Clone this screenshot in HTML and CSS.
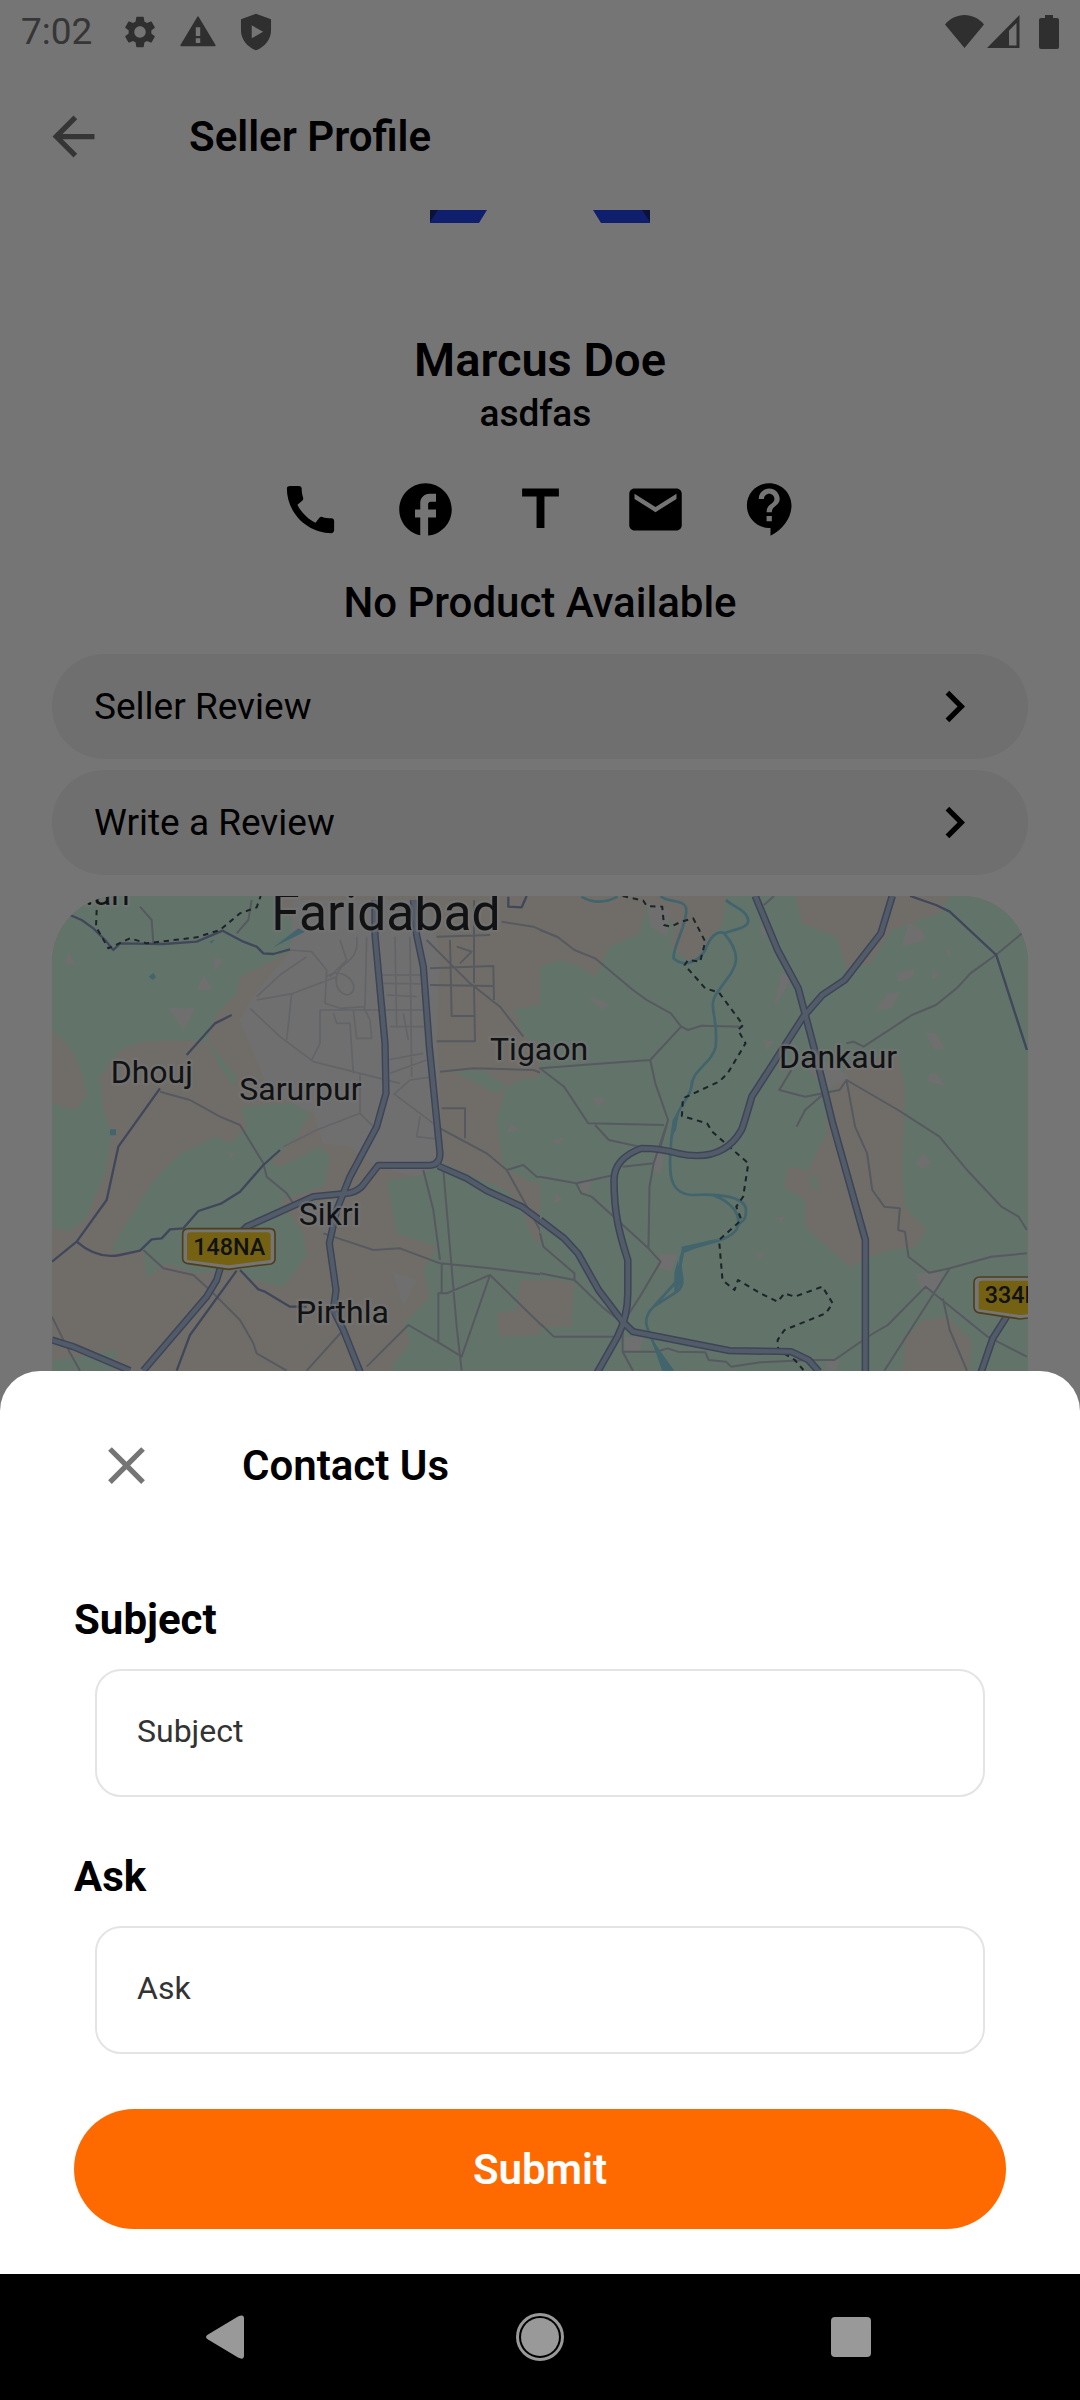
FILE: index.html
```html
<!DOCTYPE html>
<html lang="en">
<head>
  <meta charset="UTF-8">
  <meta name="viewport" content="width=device-width, initial-scale=1.0">
  <title>Seller Profile</title>
  <link rel="stylesheet" href="styles.css">
</head>
<body>
  <div class="app">
    <div class="status-bar">
      <span class="time">7:02</span>
      <svg class="status-icon" viewBox="0 0 24 24"><path fill-rule="evenodd" d="M19.14 12.94c.04-.3.06-.61.06-.94s-.02-.64-.07-.94l2.03-1.58c.18-.14.23-.41.12-.61l-1.92-3.32c-.12-.22-.37-.29-.59-.22l-2.39.96c-.5-.38-1.03-.7-1.62-.94l-.36-2.54c-.04-.24-.24-.41-.48-.41h-3.84c-.24 0-.43.17-.47.41l-.36 2.54c-.59.24-1.13.57-1.62.94l-2.39-.96c-.22-.08-.47 0-.59.22L2.74 8.87c-.12.21-.08.47.12.61l2.03 1.58c-.05.3-.09.63-.09.94s.02.64.07.94l-2.03 1.58c-.18.14-.23.41-.12.61l1.92 3.32c.12.22.37.29.59.22l2.39-.96c.5.38 1.03.7 1.62.94l.36 2.54c.05.24.24.41.48.41h3.84c.24 0 .44-.17.47-.41l.36-2.54c.59-.24 1.13-.56 1.62-.94l2.39.96c.22.08.47 0 .59-.22l1.92-3.32c.12-.22.07-.47-.12-.61l-2.01-1.58zM12 15.6c-1.98 0-3.6-1.62-3.6-3.6s1.62-3.6 3.6-3.6 3.6 1.62 3.6 3.6-1.62 3.6-3.6 3.6z"/></svg>
      <svg class="status-icon" viewBox="0 0 24 24"><path d="M1.5 21h21a.6.6 0 0 0 .5-1L12.500 2.500a.6.6 0 0 0-1 0L1 20a.6.6 0 0 0 .5 1zM13.400 19h-2.800v-3h2.800zm0-4.500h-2.800V9h2.800z"/></svg>
      <svg class="status-icon" viewBox="0 0 24 24"><path d="M12 .5 2.500 4v7c0 5.500 4 10.500 9.500 12.500 5.500-2 9.500-7 9.500-12.500V4zM9.300 16V7.800l7.200 4.100z"/></svg>
      <span class="spacer"></span>
      <svg class="wifi-icon" viewBox="0 0 114 34"><path d="M0 9.500C5 3.500 12 0 19.500 0S34 3.500 39 9.500L19.500 33z"/><path fill-rule="evenodd" d="M42 33 74.500 0v33zM64 30.500h7.500V8L64 15.500z"/><path d="M94 5q0-2 2-2h4V0h8v3h4q2 0 2 2v27q0 2-2 2H96q-2 0-2-2z"/></svg>
    </div>

    <header class="app-bar">
      <button class="icon-button" aria-label="Back">
        <svg class="icon gray" viewBox="0 0 24 24"><path d="M20 11H7.830l5.590-5.590L12 4l-8 8 8 8 1.410-1.410L7.830 13H20v-2z"/></svg>
      </button>
      <h1 class="title">Seller Profile</h1>
    </header>

    <main class="content">
      <!-- bottom of the seller logo, scrolled under the app bar -->
      <svg class="logo" viewBox="0 0 220 13"><path fill="#2343ef" d="M0 0h57l-8 13H0zM163 0h57v13h-49z"/><path fill="#16297f" d="M0 0h8L0 12zM212 0h8v12z"/></svg>

      <h2 class="seller-name">Marcus Doe</h2>
      <p class="seller-about">asdfas&nbsp;</p>

      <div class="contacts">
        <a href="#phone" aria-label="Phone"><svg class="icon" viewBox="0 0 24 24"><path d="M20.010 15.380c-1.230 0-2.420-.2-3.530-.56-.35-.12-.74-.03-1.010.24l-1.570 1.970c-2.830-1.350-5.480-3.900-6.890-6.830l1.950-1.660c.27-.28.35-.67.24-1.020-.37-1.110-.56-2.300-.56-3.530 0-.54-.45-.99-.99-.99H4.190C3.650 3 3 3.240 3 3.990 3 13.280 10.730 21 20.010 21c.71 0 .99-.63.99-1.180v-3.450c0-.54-.45-.99-.99-.99z"/></svg></a>
        <a href="#facebook" aria-label="Facebook"><svg class="icon" viewBox="0 0 24 24"><path d="M22 12c0-5.520-4.480-10-10-10S2 6.480 2 12c0 4.840 3.440 8.870 8 9.800V15H8v-3h2V9.500C10 7.570 11.570 6 13.500 6H16v3h-2c-.55 0-1 .45-1 1v2h3v3h-3v6.950c5.050-.5 9-4.760 9-9.950z"/></svg></a>
        <a href="#twitter" aria-label="Twitter"><svg class="icon" viewBox="0 0 24 24"><path d="M5 4v3h5.500v12h3V7H19V4z"/></svg></a>
        <a href="#email" aria-label="Email"><svg class="icon" viewBox="0 0 24 24"><path d="M20 4H4c-1.100 0-1.990.9-1.990 2L2 18c0 1.100.9 2 2 2h16c1.100 0 2-.9 2-2V6c0-1.100-.9-2-2-2zm0 4l-8 5-8-5V6l8 5 8-5v2z"/></svg></a>
        <a href="#contact" aria-label="Contact us"><svg class="icon" viewBox="0 0 24 24"><path d="M11.500 2C6.810 2 3 5.810 3 10.500S6.810 19 11.500 19h.5v3c4.860-2.340 8-7 8-11.500C20 5.810 16.190 2 11.500 2zm1 14.500h-2v-2h2v2zm0-3.500h-2c0-3.250 3-3 3-5 0-1.100-.9-2-2-2s-2 .9-2 2h-2c0-2.210 1.790-4 4-4s4 1.790 4 4c0 2.500-3 2.750-3 5z"/></svg></a>
      </div>

      <p class="empty">No Product Available</p>

      <div class="links">
        <a class="link-row" href="#reviews">Seller Review
          <svg class="icon" viewBox="0 0 24 24"><path d="M10 6 8.590 7.410 13.170 12l-4.580 4.590L10 18l6-6z"/></svg></a>
        <a class="link-row" href="#write">Write a Review
          <svg class="icon" viewBox="0 0 24 24"><path d="M10 6 8.590 7.410 13.170 12l-4.580 4.590L10 18l6-6z"/></svg></a>
      </div>

      <svg class="map" viewBox="36 48 2928 1800" preserveAspectRatio="xMidYMin slice" role="img" aria-label="Map">
        <rect class="land" x="36" y="48" width="2928" height="1800"/>

        <!-- west half -->
        <path class="forest" d="M36 48H700L760 120 750 215 600 290 590 340 530 400 500 480 590 590 580 620 540 560 500 485 400 480 300 485 240 510 180 590 190 690 215 760 195 880 140 1010 90 1055 36 1040V670L110 690 140 640 120 560 80 490 36 455z"/>
        <path class="forest" d="M600 680 760 670 810 700 770 770 690 850 720 860 840 800 870 830 850 920 720 960 790 1060 800 1130 730 1220 640 1200 590 1170 470 1180 380 1150 320 1195 310 1110 210 1115 240 1060 340 900 420 820 530 770 570 790 620 740z"/>
        <path class="forest" d="M1040 900 1130 890 1210 850 1400 930 1450 1000 1480 1080 1640 1150 1640 1200 1440 1200 1430 1290 1370 1300 1380 1370 1640 1360V1848H1030L1060 1450 1110 1390 1090 1330 1170 1250 1150 1170 1190 1100 1070 1060z"/>
        <path class="forest" d="M1560 250 1500 310 1520 370 1420 390 1450 470 1560 520V900L1480 910 1390 860 1370 720 1400 620 1330 570 1240 575 1330 620 1370 640 1440 600 1560 580z"/>
        <path class="forest" d="M36 1440 120 1430 230 1410 220 1480 36 1520z"/>
        <path class="urban" d="M760 60H1160L1200 220 1190 480 1210 850 1130 890 1010 860 930 800 850 790 820 700 690 640 600 420 640 350 750 215z"/>
        <path class="urban" d="M490 285 520 330 470 330zM520 235 550 238 525 275zM385 385 465 385 430 450zM85 215 108 255 75 250zM780 970 900 960 860 1060 790 1010zM1060 1180 1130 1200 1090 1280zM1410 730 1440 750 1400 760zM565 815 585 820 570 838z"/>

        <g class="street">
          <path d="M750 210 815 215 860 270 855 370 900 385 975 380 980 170M650 350 720 285 800 230M650 360 760 340 890 290M755 340 740 480M630 385 720 470 820 545 960 580 1080 610M840 390V490L815 540M840 390H1150M880 400 890 430 930 430 940 580M940 390 950 475 995 475 990 420 970 380M860 290C900 260 950 300 940 330S880 340 890 290 960 250 950 170M900 180 920 240 870 290M1020 285H1150M1030 310 1160 312M1040 345 1130 350M1050 440H1170M1040 540 1150 520M1050 580 1160 540M1110 170 1115 590M1065 170 1070 440M1090 400 1105 480M960 580 960 700 1000 740M730 800 830 750 960 700M1060 640 1200 745 1340 820M1140 710 1130 770 1200 778M1065 640 1110 600 1180 590"/>
        </g>
        <g class="lane">
          <path d="M300 80 335 120 340 190M590 160 625 120 635 60M360 635 450 660 540 710 600 735 670 850 680 890 740 940 760 970M850 1060 1000 1110 1080 1105 1200 1150 1350 1165 1560 1190M310 1110 370 1165 460 1185 520 1240 600 1320 640 1390 650 1420 740 1472M36 1310 80 1400 120 1472M800 1472 910 1350M980 1460 1105 1335 1200 1390 1265 1430 1350 1185 1540 1370M1350 1185 1290 1210 1220 1240 1195 1240 1195 1390M1205 1150V1240M1150 870 1180 990 1200 1140M1210 870 1250 1340 1265 1472M1200 745 1340 820 1400 870 1450 960 1500 1050 1510 1100 1600 1150M1400 870 1450 855 1490 890 1600 900M1200 575 1300 565 1480 570 1560 600M1205 685H1275V775"/>
          <path d="M1190 170 1350 165M1170 265 1360 258 1362 360M1170 315 1360 318M1230 180 1235 408 1302 408M1302 60V310M1190 484H1305L1302 318M1160 180 1290 310 1380 380 1450 470M1385 125 1480 140 1560 175M1250 200 1295 215 1260 250"/>
        </g>
        <path class="minor" d="M90 105 125 120 160 145 195 180 220 210 240 190 370 192 470 185 548 152 610 185 650 200 670 220 700 222 750 208M575 405 525 430 440 525M360 625 235 800 200 960 110 1085 36 1145M110 1085C150 1120 190 1135 240 1125L300 1112 335 1078 365 1075 390 1048 430 1045 475 993 545 970 600 935 670 855 720 810M590 1172 450 1365 410 1472M600 1170 655 1228 675 1235 750 1280 800 1280M1405 50V80L1445 82 1460 48"/>
        <path class="water-fill" d="M700 202 775 145 795 155zM326 290 340 278 348 292 338 300zM210 748h18v18h-18zM508 185 525 178 515 190z"/>
        <path class="border-line" d="M170 90 168 140 205 205 270 175 320 190 470 172 540 150 600 100 650 82 662 48"/>
        <g class="highway">
          <path id="h1" d="M1005 60V165L1035 490 1038 640 1010 740 930 890 890 990 868 1090 888 1230 880 1290 910 1350 962 1480"/>
          <path id="h2" d="M1120 60 1130 165 1150 260 1168 500 1200 820Q1200 855 1170 856H1015L965 920Q945 938 920 940L820 950 620 1040 560 1100 530 1200 500 1250 310 1472"/>
          <path id="h3" d="M1195 858 1280 895 1340 932 1445 980 1560 1065M36 1380 100 1400 270 1472"/>
        </g>
        <g class="highway-fill"><use href="#h1"/><use href="#h2"/><use href="#h3"/></g>

        <!-- east half -->
        <g transform="translate(1500 0) scale(1.033 1)">
          <path class="forest" d="M0 260 60 240 110 255 160 290 200 200 290 160 310 80 370 90 390 140 380 200 440 250 480 200 530 130 540 48H740L760 130 860 170 890 270 960 250 1020 150 1160 100 1190 48H1420V1848H1240L1250 1380 1180 1310 1110 1320 1060 1380 1050 1500H0V1340L90 1340 100 1210 0 1190z"/>
          <path class="land" d="M890 560 1040 520 1060 640 1050 870 1060 980 1120 1050 1090 1100 1020 1110 960 1130 900 1160 770 1040 770 960 710 920 720 860 780 870 830 760 830 660z"/>
          <path class="forest" d="M780 880 800 890 815 935 790 920z"/>
          <path class="urban" d="M310 70 380 90 370 170 320 140zM1070 130 1110 150 1120 180 1050 200zM1010 340 1045 335 1020 385 975 390zM1120 455 1150 460 1175 505 1145 510zM1130 580 1150 580 1178 618 1125 605zM1115 820 1138 850 1110 868 1090 850zM700 280 735 290 680 380zM640 140 670 110 650 180zM140 350 200 370 180 390zM350 1120 400 1125 380 1175 340 1160zM1090 1180 1170 1180 1150 1240 1110 1230zM245 1370 300 1370 290 1415 245 1410zM125 900 150 890 140 940 115 930zM830 1440 870 1440 860 1472 830 1472zM150 655 188 655 170 680zM35 780 75 770 50 795zM1140 270 1165 285 1140 298zM1180 205 1195 215 1185 235zM650 480 680 485 660 510zM625 1118 655 1120 635 1138zM330 800 360 830 350 880 330 870zM1040 280 1090 265 1080 295 1040 305zM760 540 820 540 900 590 830 630zM690 1010 712 1010 700 1030zM45 940 65 960 40 970z"/>
          <g class="lane">
            <path d="M0 150 50 170 100 210 160 235 270 330 310 360 380 400 410 440 320 540 190 550 0 565 70 620 140 730 360 735M410 440 430 450 470 437 590 440M320 540 335 610 372 720 330 850 240 860M372 720 350 800M160 735 200 780 290 800M0 890 105 910 215 885M105 910 120 940 150 950 315 1105 350 1145 290 1250 240 1330 240 1415 270 1472M330 850 318 920 315 1105M0 1060 10 1100 100 1180 100 1200 0 1180M100 1200 180 1280 240 1330M0 1330 40 1370H240M240 1415 340 1415 370 1405 400 1415 480 1417 490 1440 540 1445 555 1460 640 1447 780 1440 855 1440 960 1365 1010 1335 1120 1220 1300 1370 1414 1430M1000 1472 1150 1230 1190 1165 1130 1178 1070 1130 1060 1055 1040 1050 1045 985 1000 980 965 930 950 820 915 740 890 600 1040 690 1160 770 1240 870 1340 980 1390 1010 1414 1050M1190 1165 1310 1130 1414 1120M1170 1255 1190 1350 1240 1472M890 600 870 630 770 650 695 630 730 570M820 645 770 690 745 740M890 490 910 485 940 500 1080 405 1150 375 1210 325 1250 280 1330 220 1400 160M650 75 680 48"/>
          </g>
          <path class="minor" d="M1075 48 1150 75 1190 95 1325 225 1414 510"/>
          <path class="river" d="M120 50Q170 80 225 50M350 48C370 70 425 55 425 90 425 140 385 200 388 235 420 265 460 245 480 210 500 150 530 155 535 160 600 240 560 270 520 330 480 380 520 400 510 500 500 550 440 570 440 620 430 670 385 680 380 800 370 910 390 940 440 945 520 940 590 950 598 985 600 1020 590 1020 575 1035M500 945C560 965 590 1010 570 1050 540 1090 460 1090 415 1115L400 1200 330 1280C290 1320 315 1350 330 1390L375 1480M415 1115C390 1170 440 1210 390 1240L330 1280M540 60C560 80 600 90 605 120 605 145 570 145 535 160"/>
          <path class="water-fill" d="M411 1100 520 1075 440 1110 411 1122zM400 1140 412 1205 390 1245 390 1180zM320 1370 390 1472H355zM385 720 405 690 395 750 378 780z"/>
          <path class="border-line" d="M240 48 300 62 310 78 355 80 360 135 380 140 410 125 445 115 480 185 465 245 430 240 420 255 480 325 520 338 590 435 575 450 597 490 545 580 520 605 415 655 412 708 485 730 500 755 605 850 590 950 570 980 585 1020 520 1080 530 1200 565 1230 575 1200 640 1240 690 1265 710 1240 740 1250 820 1220 850 1270 830 1300 710 1350 690 1380 692 1410 740 1440 765 1470"/>
          <g class="highway">
            <path id="h4" d="M625 48 690 210 750 325 800 520 850 730 945 1080V1480M1023 48 990 160 885 300 820 345 765 410 615 650Q590 740 585 750 530 850 400 820 350 805 295 805 215 835 215 900C215 1000 230 1060 255 1140V1240Q255 1310 225 1370L165 1480"/>
            <path id="h5" d="M0 1020 70 1075 110 1120 170 1230 240 1325 270 1355 550 1412 730 1415 780 1440 810 1475M1355 1310 1315 1375 1280 1480"/>
          </g>
          <g class="highway-fill"><use href="#h4"/><use href="#h5"/></g>
        </g>

        <g class="shield">
          <path d="M445 1046H690Q705 1046 705 1062V1138Q705 1148 693 1152 620 1160 566 1168 510 1160 440 1150 428 1146 428 1136V1062Q428 1046 445 1046z"/>
          <path class="shield-inner" d="M452 1057H682Q692 1057 692 1066V1140L566 1156 441 1140V1066Q441 1057 452 1057z"/>
          <path d="M2820 1191H3080V1300L2940 1317 2815 1298Q2802 1293 2802 1280V1208Q2802 1191 2820 1191z"/>
          <path class="shield-inner" d="M2825 1202H3080V1290L2940 1305 2816 1288V1211Q2816 1202 2825 1202z"/>
        </g>
        <text class="route" x="460" y="1124">148NA</text>
        <text class="route" x="2834" y="1270">334D</text>

        <text class="city" x="694" y="151">Faridabad</text>
        <text class="town" x="136" y="76">.ari</text>
        <text class="town" x="212" y="609">Dhouj</text>
        <text class="town" x="598" y="660">Sarurpur</text>
        <text class="town" x="1350" y="541">Tigaon</text>
        <text class="town" x="776" y="1036">Sikri</text>
        <text class="town" x="768" y="1330">Pirthla</text>
        <text class="town" x="2217" y="565">Dankaur</text>
      </svg>
    </main>
  </div>

  <div class="overlay">
    <section class="sheet">
      <div class="sheet-header">
        <button class="icon-button" aria-label="Close">
          <svg class="icon gray" viewBox="0 0 24 24"><path d="M19 6.410 17.590 5 12 10.590 6.410 5 5 6.410 10.590 12 5 17.590 6.410 19 12 13.410 17.590 19 19 17.590 13.410 12z"/></svg>
        </button>
        <h2 class="title">Contact Us</h2>
      </div>
      <form class="contact-form">
        <label for="subject">Subject</label>
        <input type="text" id="subject" placeholder="Subject">
        <label for="ask">Ask</label>
        <input type="text" id="ask" placeholder="Ask">
        <button class="submit" type="submit">Submit</button>
      </form>
    </section>
    <nav class="nav-bar">
      <button aria-label="Back"><svg viewBox="0 0 48 48"><path d="M6 21.500 36 3.500q6-3 6 2v37q0 5-6 2L6 26.500q-4-2.500 0-5z"/></svg></button>
      <button aria-label="Home"><svg viewBox="0 0 48 48"><circle cx="24" cy="24" r="19"/><circle class="ring" cx="24" cy="24" r="22.500"/></svg></button>
      <button aria-label="Recent apps"><svg viewBox="0 0 48 48"><rect x="1" y="4" width="40" height="40" rx="4"/></svg></button>
    </nav>
  </div>
</body>
</html>
```
FILE: styles.css
```css
* {
  box-sizing: border-box;
}
body {
  margin: 0;
  height: 100vh;
  overflow: hidden;
  font-family: Roboto, "Noto Sans", sans-serif;
  color: #000;
  background-color: #fff;
}
h1, h2, p {
  margin: 0;
}
button {
  border: none;
  padding: 0;
  background: none;
  font-family: inherit;
  cursor: pointer;
}
a {
  color: inherit;
  text-decoration: none;
}
svg {
  display: block;
}
.app {
  height: 100%;
  overflow: hidden;
}
.status-bar {
  display: flex;
  align-items: center;
  height: 63px;
  padding: 0 21px;
  fill: #666;
}
.time {
  width: 100px;
  font-size: 37px;
  font-weight: 400;
  color: #777;
}
.status-icon {
  width: 38px;
  height: 38px;
  margin-right: 20px;
}
.spacer {
  flex: 1;
}
.wifi-icon {
  width: 114px;
  height: 34px;
}
.icon {
  width: 63px;
  height: 63px;
  fill: #000;
}
.gray {
  fill: #757575;
}
.app-bar {
  display: flex;
  align-items: center;
  gap: 84px;
  height: 147px;
  padding: 0 42px;
}
.title {
  font-size: 42px;
  line-height: 50px;
  font-weight: 600;
}
.content {
  padding: 0 52px;
  text-align: center;
}
.logo {
  width: 220px;
  height: 13px;
  margin: 0 auto 109px;
}
.seller-name {
  font-size: 47px;
  line-height: 56px;
  font-weight: 600;
}
.seller-about {
  font-size: 37px;
  line-height: 52px;
  font-weight: 500;
}
.contacts {
  display: flex;
  justify-content: center;
  gap: 52px;
  margin: 38px 0 37px;
}
.empty {
  font-size: 42px;
  line-height: 50px;
  font-weight: 500;
}
.links {
  display: flex;
  flex-direction: column;
  gap: 11px;
  margin: 26px 0 21px;
}
.link-row {
  display: flex;
  justify-content: space-between;
  align-items: center;
  height: 105px;
  padding: 0 42px;
  border-radius: 52px;
  font-size: 37px;
  background-color: #f2f2f2;
}
.map {
  width: 100%;
  height: 600px;
  border-radius: 66px;
}

/* map layers */
.land {
  fill: #f3eee2;
}
.forest {
  fill: #d5fae4;
}
.urban {
  fill: #f3f1f2;
}
.street, .lane, .minor, .river, .border-line, .highway, .highway-fill {
  fill: none;
  stroke-linejoin: round;
}
.street {
  stroke: #d6d9e2;
  stroke-width: 5;
}
.lane {
  stroke: #bcc2cf;
  stroke-width: 6;
}
.minor {
  stroke: #8b9bc4;
  stroke-width: 7;
}
.river {
  stroke: #90daee;
  stroke-width: 8;
}
.water-fill {
  fill: #90daee;
}
.border-line {
  stroke: #40505a;
  stroke-width: 6;
  stroke-dasharray: 16 14;
}
.highway {
  stroke: #8794bd;
  stroke-width: 22;
}
.highway-fill {
  stroke: #b3c8e5;
  stroke-width: 13;
}
.highway-fill use {
  stroke: #b3c8e5;
  stroke-width: 13;
}
.shield {
  fill: #fff;
  stroke: #a98a3c;
  stroke-width: 5;
}
.shield-inner {
  fill: #ffd329;
  stroke: none;
}
.map text {
  fill: #26282c;
}
.route {
  font-size: 70px;
  font-weight: 500;
}
.city, .town {
  stroke: #fff;
  stroke-width: 14;
  stroke-opacity: 0.6;
  stroke-linejoin: round;
  paint-order: stroke;
}
.city {
  font-size: 155px;
}
.town {
  font-size: 96px;
}

.overlay {
  position: fixed;
  inset: 0;
  display: flex;
  flex-direction: column;
  justify-content: flex-end;
  background-color: rgba(0, 0, 0, 0.54);
}
.sheet {
  padding: 63px 74px 45px;
  border-radius: 40px 40px 0 0;
  background-color: #fff;
}
.sheet-header {
  display: flex;
  align-items: center;
  gap: 84px;
  padding: 0 21px;
}
.contact-form {
  display: flex;
  flex-direction: column;
  margin-top: 98px;
}
.contact-form label {
  font-size: 42px;
  line-height: 50px;
  font-weight: 700;
}
.contact-form input {
  height: 128px;
  margin: 24px 21px 55px;
  padding: 0 40px 4px;
  border: 2px solid #e4e4e4;
  border-radius: 26px;
  font-family: inherit;
  font-size: 32px;
  background-color: #fff;
}
.contact-form input::placeholder {
  color: #333;
}
.submit {
  height: 120px;
  border-radius: 60px;
  font-size: 42px;
  font-weight: 600;
  color: #fff;
  background-color: #ff6a00;
}
.nav-bar {
  display: flex;
  justify-content: space-between;
  align-items: center;
  height: 126px;
  padding: 0 202px;
  background-color: #000;
}
.nav-bar svg {
  width: 48px;
  height: 48px;
  fill: #999;
}
.nav-bar .ring {
  fill: none;
  stroke: #999;
  stroke-width: 3;
}
```
